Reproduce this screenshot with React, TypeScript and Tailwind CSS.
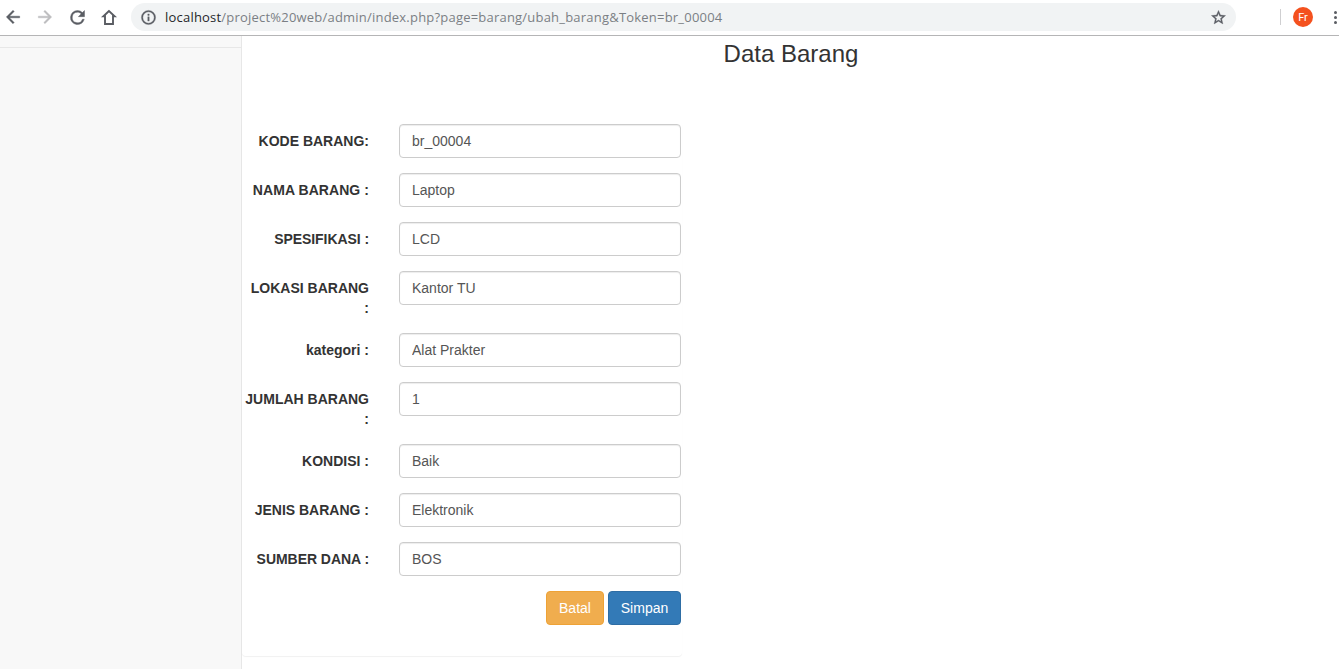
import React from 'react';

type Field = { label: string; value: string; labelClass: string };

const fields: Field[] = [
  { label: 'KODE BARANG:', value: 'br_00004', labelClass: '' },
  { label: 'NAMA BARANG :', value: 'Laptop', labelClass: 'tracking-[0.06px]' },
  { label: 'SPESIFIKASI :', value: 'LCD', labelClass: 'tracking-[-0.07px]' },
  { label: 'LOKASI BARANG :', value: 'Kantor TU', labelClass: '' },
  { label: 'kategori :', value: 'Alat Prakter', labelClass: '' },
  { label: 'JUMLAH BARANG :', value: '1', labelClass: '' },
  { label: 'KONDISI :', value: 'Baik', labelClass: '' },
  { label: 'JENIS BARANG :', value: 'Elektronik', labelClass: '' },
  { label: 'SUMBER DANA :', value: 'BOS', labelClass: 'tracking-[-0.05px]' },
];

function Icon({ d, className }: { d: string; className: string }) {
  return (
    <svg viewBox="0 0 24 24" className={`shrink-0 ${className}`} fill="currentColor" stroke="currentColor" strokeWidth="0.5" aria-hidden="true">
      <path d={d} />
    </svg>
  );
}

function BrowserBar() {
  return (
    <header className="flex h-9 shrink-0 items-center border-b border-[#b5b5b6] bg-white text-[#5a5d63]">
      <div className="flex w-[131px] shrink-0 items-center gap-3 pl-[3px]">
        <Icon className="-mt-px h-5 w-5" d="M20 11H7.83l5.59-5.59L12 4l-8 8 8 8 1.41-1.41L7.83 13H20v-2z" />
        <Icon className="-mt-px h-5 w-5 text-[#bdbdbf]" d="M12 4l-1.41 1.41L16.17 11H4v2h12.17l-5.58 5.59L12 20l8-8z" />
        <Icon
          className="-mt-px h-[21px] w-[21px]"
          d="M17.65 6.35A7.96 7.96 0 0 0 12 4a8 8 0 1 0 7.73 10h-2.08A6 6 0 1 1 12 6c1.66 0 3.14.69 4.22 1.78L13 11h7V4l-2.35 2.35z"
        />
        <svg viewBox="0 0 18 18" className="-mt-px h-[18px] w-[18px] shrink-0" fill="none" stroke="currentColor" strokeWidth="1.9" aria-hidden="true">
          <path d="M9 3 3.4 8.2H5V16h8V8.2h1.6z" />
        </svg>
      </div>
      <div className="-mt-px flex h-7 w-[1105px] shrink-0 items-center rounded-full bg-[#f1f3f4] pl-[9px] pr-[9px]">
        <Icon
          className="h-[17px] w-[17px]"
          d="M11 7h2v2h-2zm0 4h2v6h-2zm1-9a10 10 0 1 0 0 20 10 10 0 0 0 0-20zm0 18a8 8 0 1 1 0-16 8 8 0 0 1 0 16z"
        />
        <span className="ml-2 whitespace-nowrap font-['Open_Sans','Noto_Sans',sans-serif] text-[13px] leading-5 tracking-[0.21px] text-[#7b7f84]">
          <span className="text-[#25272a]">localhost</span>
          /project%20web/admin/index.php?page=barang/ubah_barang&amp;Token=br_00004
        </span>
        <Icon
          className="ml-auto h-[17px] w-[17px]"
          d="M22 9.24l-7.19-.62L12 2 9.19 8.63 2 9.24l5.46 4.73L5.82 21 12 17.27 18.18 21l-1.63-7.03L22 9.24zM12 15.4l-3.76 2.27 1-4.28-3.32-2.88 4.38-.38L12 6.1l1.71 4.04 4.38.38-3.32 2.88 1 4.28L12 15.4z"
        />
      </div>
      <div className="-mt-px ml-11 h-4 w-px shrink-0 bg-[#cfcfd1]" />
      <div className="-mt-px ml-3 flex h-5 w-5 shrink-0 items-center justify-center rounded-full bg-[#f4511e] pt-px font-['Roboto',sans-serif] text-[11px] text-white">
        Fr
      </div>
      <div className="-mt-px ml-[21px] flex shrink-0 flex-col gap-0.5">
        <i className="h-[3px] w-[3px] rounded-full bg-[#5a5d63]" />
        <i className="h-[3px] w-[3px] rounded-full bg-[#5a5d63]" />
        <i className="h-[3px] w-[3px] rounded-full bg-[#5a5d63]" />
      </div>
    </header>
  );
}

function FormRow({ label, value, labelClass }: Field) {
  return (
    <div className="mb-[15px] flex items-start gap-[30px]">
      <label className={`w-[127px] shrink-0 pt-[7px] pl-[2px] text-right font-bold leading-5 text-[#333] ${labelClass}`}>{label}</label>
      <input
        className="h-[34px] w-[282px] rounded border border-[#ccc] bg-white px-3 py-1.5 text-[#555] shadow-[inset_0_1px_1px_rgba(0,0,0,0.075)] outline-none"
        defaultValue={value}
      />
    </div>
  );
}

export default function App() {
  return (
    <div className="flex h-[669px] w-[1339px] flex-col overflow-hidden bg-white font-['Liberation_Sans',Arial,sans-serif] text-sm text-[#333]">
      <BrowserBar />
      <div className="flex min-h-0 flex-1">
        <aside className="w-[242px] shrink-0 border-r border-[#e7e7e7] bg-[#f8f8f8]">
          <div className="h-3 border-b border-[#e7e7e7]" />
        </aside>
        <main className="flex-1">
          <h3 className="pt-[5px] pl-px text-center text-2xl leading-[26px] font-normal">Data Barang</h3>
          <form className="mt-[57px] h-[532px] w-[440px] rounded-b pr-px shadow-[0_1px_1px_rgba(0,0,0,0.06)]">
            {fields.map((field) => (
              <FormRow key={field.label} {...field} />
            ))}
            <div className="flex justify-end gap-1 text-white">
              <button type="button" className="h-[34px] w-[58px] rounded border border-[#eea236] bg-[#f0ad4e]">
                Batal
              </button>
              <button type="button" className="h-[34px] w-[73px] rounded border border-[#2e6da4] bg-[#337ab7]">
                Simpan
              </button>
            </div>
          </form>
        </main>
      </div>
    </div>
  );
}
